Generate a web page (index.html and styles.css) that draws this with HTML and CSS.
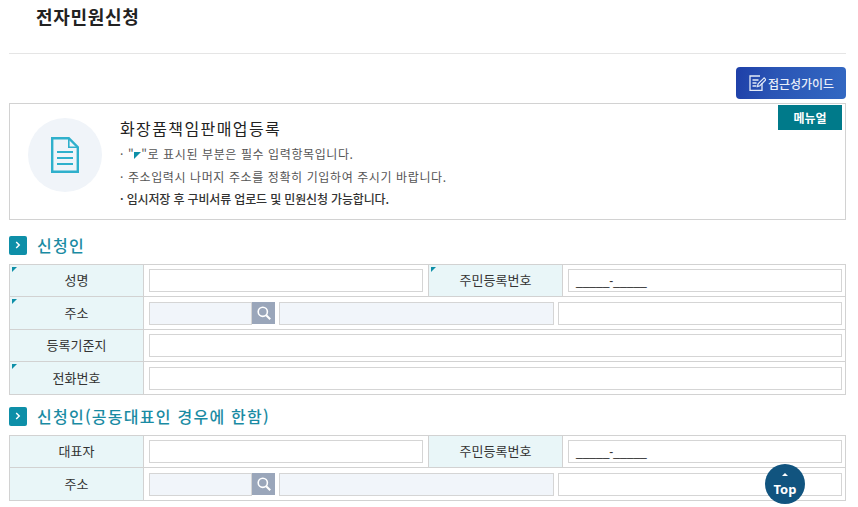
FILE: index.html
```html
<!DOCTYPE html>
<html lang="ko">
<head>
    <meta charset="UTF-8">
    <title>전자민원신청</title>
    <link rel="stylesheet" href="styles.css">
</head>
<body>
<div class="wrap">
    <h1 class="page-title">전자민원신청</h1>

    <div class="guide-row">
        <a class="guide-btn">
            <svg width="18" height="18" viewBox="0 0 18 18" fill="none" stroke="#e4ebf8" stroke-width="1.3">
                <path d="M14 9v7.3H2V2h10"/>
                <path d="M4.5 6h6M4.5 9h4M4.5 12h4"/>
                <path d="M9.5 12.5l.6-2.6 6-6 1.8 1.8-6 6z" stroke-width="1.2"/>
            </svg>
            접근성가이드
        </a>
    </div>

    <section class="info-box">
        <a class="manual-btn">메뉴얼</a>
        <div class="info-icon">
            <svg width="28" height="36" viewBox="0 0 28 36" fill="none" stroke="#2fb0cc" stroke-width="2.4">
                <path d="M1.2 1.2h16.6l9 9v24.6H1.2z"/>
                <path d="M17.8 1.2v9h9" stroke-width="1.6"/>
                <path d="M6 15h16M6 21h16M6 27h16" stroke-width="2"/>
            </svg>
        </div>
        <div class="info-text">
            <h2>화장품책임판매업등록</h2>
            <p>· "<span class="mark-inline"></span>"로 표시된 부분은 필수 입력항목입니다.</p>
            <p>· 주소입력시 나머지 주소를 정확히 기입하여 주시기 바랍니다.</p>
            <p class="strong">· 임시저장 후 구비서류 업로드 및 민원신청 가능합니다.</p>
        </div>
    </section>

    <h3 class="sec-title first"><span class="sec-bullet"><svg width="6" height="8" viewBox="0 0 6 8" fill="none" stroke="#fff" stroke-width="1.5"><path d="M1.2 1l3 3-3 3"/></svg></span>신청인</h3>
    <table class="form-table">
        <colgroup><col class="c-th"><col class="c-td"><col class="c-th"><col></colgroup>
        <tr>
            <th class="req">성명</th>
            <td class="half"><input class="inp" type="text"></td>
            <th class="req">주민등록번호</th>
            <td><div class="inp rrn">_____-_____</div></td>
        </tr>
        <tr>
            <th class="req">주소</th>
            <td colspan="3">
                <div class="addr">
                    <input class="inp gray post" type="text">
                    <a class="search-btn">
                        <svg width="14" height="14" viewBox="0 0 14 14" fill="none" stroke="#fff" stroke-width="1.6">
                            <circle cx="5.8" cy="5.8" r="4.6"/>
                            <path d="M9.2 9.2l4 4" stroke-width="2"/>
                        </svg>
                    </a>
                    <input class="inp gray addr1" type="text">
                    <input class="inp addr2" type="text">
                </div>
            </td>
        </tr>
        <tr>
            <th>등록기준지</th>
            <td colspan="3"><input class="inp" type="text"></td>
        </tr>
        <tr>
            <th class="req">전화번호</th>
            <td colspan="3"><input class="inp" type="text"></td>
        </tr>
    </table>

    <h3 class="sec-title"><span class="sec-bullet"><svg width="6" height="8" viewBox="0 0 6 8" fill="none" stroke="#fff" stroke-width="1.5"><path d="M1.2 1l3 3-3 3"/></svg></span>신청인(공동대표인 경우에 한함)</h3>
    <table class="form-table">
        <colgroup><col class="c-th"><col class="c-td"><col class="c-th"><col></colgroup>
        <tr>
            <th>대표자</th>
            <td class="half"><input class="inp" type="text"></td>
            <th>주민등록번호</th>
            <td><div class="inp rrn">_____-_____</div></td>
        </tr>
        <tr>
            <th>주소</th>
            <td colspan="3">
                <div class="addr">
                    <input class="inp gray post" type="text">
                    <a class="search-btn">
                        <svg width="14" height="14" viewBox="0 0 14 14" fill="none" stroke="#fff" stroke-width="1.6">
                            <circle cx="5.8" cy="5.8" r="4.6"/>
                            <path d="M9.2 9.2l4 4" stroke-width="2"/>
                        </svg>
                    </a>
                    <input class="inp gray addr1" type="text">
                    <input class="inp addr2" type="text">
                </div>
            </td>
        </tr>
    </table>
</div>

<a class="top-btn"><span class="top-arrow"></span>Top</a>
</body>
</html>
```

FILE: styles.css
```css
* {
	box-sizing: border-box;
}
html, body {
	margin: 0;
	padding: 0;
	height: 507px;
	overflow: hidden;
	background: #fff;
	color: #333;
	font-family: "Noto Sans CJK KR", "Noto Sans", sans-serif;
	font-size: 13px;
}
.wrap {
	padding: 0 12px 0 9px;
}
.page-title {
	margin: 0;
	height: 54px;
	padding: 2px 0 0 27px;
	font-size: 18px;
	line-height: 28px;
	font-weight: 700;
	letter-spacing: .7px;
	color: #222;
	border-bottom: 1px solid #e5e5e5;
}
.guide-row {
	display: flex;
	justify-content: flex-end;
	padding-top: 13px;
	height: 49px;
}
.guide-btn {
	display: flex;
	align-items: center;
	justify-content: center;
	gap: 2px;
	width: 110px;
	height: 32px;
	border-radius: 4px;
	background: linear-gradient(100deg, #1e3fa8 0%, #2a55b5 35%, #3368c2 100%);
	color: #e8eef9;
	font-size: 12px;
	font-weight: 500;
}
.info-box {
	position: relative;
	display: flex;
	height: 117px;
	padding: 14px 18px;
	border: 1px solid #d2d2d2;
}
.manual-btn {
	position: absolute;
	top: 1px;
	right: 3px;
	width: 64px;
	height: 25px;
	background: #007a8a;
	color: #fff;
	font-size: 12px;
	font-weight: 700;
	line-height: 25px;
	text-align: center;
}
.info-icon {
	display: flex;
	align-items: center;
	justify-content: center;
	flex: none;
	width: 74px;
	height: 74px;
	border-radius: 50%;
	background: #f0f4f9;
}
.info-text {
	margin-left: 18px;
	margin-top: -2px;
}
.info-text h2 {
	margin: 0 0 3px;
	font-size: 16px;
	line-height: 24px;
	font-weight: 400;
	letter-spacing: 1.4px;
	color: #222;
}
.info-text p {
	margin: 0;
	font-size: 12px;
	line-height: 22.5px;
	letter-spacing: .6px;
	color: #555;
}
.info-text p.strong {
	font-weight: 500;
	letter-spacing: -.15px;
	color: #333;
}
.mark-inline {
	display: inline-block;
	width: 0;
	height: 0;
	border-style: solid;
	border-width: 7px 7px 0 0;
	border-color: #0e8fa8 transparent transparent transparent;
}
.sec-title {
	display: flex;
	align-items: center;
	margin: 2px 0 0;
	height: 38px;
	font-size: 16px;
	font-weight: 500;
	letter-spacing: 1.25px;
	color: #1a8ba3;
}
.sec-title.first {
	margin-top: 6px;
}
.sec-bullet {
	display: flex;
	align-items: center;
	justify-content: center;
	width: 18px;
	height: 19px;
	margin-right: 10px;
	border-radius: 2px;
	background: #0e8fa8;
}
.form-table {
	width: 837px;
	table-layout: fixed;
	border-collapse: collapse;
}
.c-th {
	width: 134px;
}
.c-td {
	width: 285px;
}
.form-table tr:nth-child(odd) th, .form-table tr:nth-child(odd) td {
	height: 32px;
}
.form-table tr:nth-child(even) th, .form-table tr:nth-child(even) td {
	height: 33px;
}
.form-table th, .form-table td {
	padding: 0;
	border: 1px solid #d2d2d2;
}
.form-table th {
	position: relative;
	padding-bottom: 2px;
	background: #e9f6f8;
	font-size: 13px;
	font-weight: 400;
	color: #333;
	text-align: center;
}
.form-table td {
	padding: 0 3px 0 5px;
}
.form-table td.half {
	padding-right: 5px;
}
.form-table th.req::before {
	content: "";
	position: absolute;
	top: 2px;
	left: 2px;
	border-style: solid;
	border-width: 5px 5px 0 0;
	border-color: #0e8fa8 transparent transparent transparent;
}
.inp {
	display: block;
	width: 100%;
	height: 23px;
	padding: 0 7px;
	border: 1px solid #d5d5d5;
	background: #fff;
	outline: none;
}
.inp.gray {
	background: #f1f5fa;
}
.rrn {
	font-family: "Liberation Sans", sans-serif;
	font-size: 12px;
	line-height: 22px;
	color: #333;
}
.addr {
	display: flex;
	align-items: center;
}
.addr .post {
	width: 103px;
}
.search-btn {
	display: flex;
	align-items: center;
	justify-content: center;
	flex: none;
	width: 23px;
	height: 22px;
	background: #9aa6ba;
}
.addr .addr1 {
	width: 275px;
	margin-left: 4px;
}
.addr .addr2 {
	flex: 1;
	margin-left: 4px;
}
.top-btn {
	position: fixed;
	left: 765px;
	top: 464px;
	display: block;
	width: 40px;
	height: 40px;
	padding-top: 9px;
	border-radius: 50%;
	background: #11547f;
	color: #fff;
	font-family: "Noto Sans", sans-serif;
	font-size: 13px;
	font-weight: 700;
	line-height: 16px;
	text-align: center;
}
.top-arrow {
	display: block;
	width: 0;
	height: 0;
	margin: 0 auto 5px;
	border-style: solid;
	border-width: 0 3px 3px;
	border-color: transparent transparent #fff;
}
```
